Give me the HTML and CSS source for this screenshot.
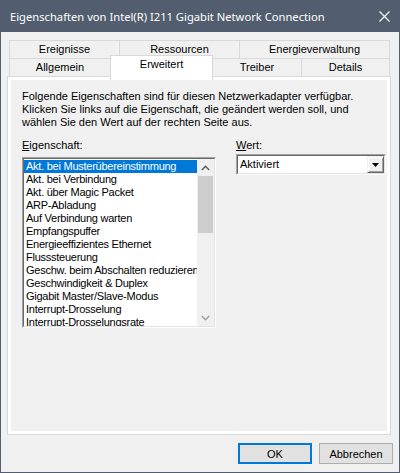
FILE: index.html
```html
<!DOCTYPE html>
<html lang="de">
<head>
<meta charset="utf-8">
<title>Eigenschaften</title>
<link rel="stylesheet" href="styles.css">
</head>
<body>
<div class="window">
  <div class="titlebar">
    <span class="title">Eigenschaften von Intel(R) I211 Gigabit Network Connection</span>
    <svg class="close" width="11" height="11" viewBox="0 0 11 11"><path d="M0.5 0.5 L10.5 10.5 M10.5 0.5 L0.5 10.5" stroke="#ffffff" stroke-width="1.1" fill="none"/></svg>
  </div>
  <div class="client">
    <div class="tabs">
      <div class="tabrow">
        <div class="tab t-ereignisse">Ereignisse</div>
        <div class="tab t-ressourcen">Ressourcen</div>
        <div class="tab t-energie">Energieverwaltung</div>
      </div>
      <div class="tabrow">
        <div class="tab t-allgemein">Allgemein</div>
        <div class="tab t-erweitert selected">Erweitert</div>
        <div class="tab t-treiber">Treiber</div>
        <div class="tab t-details">Details</div>
      </div>
    </div>
    <div class="panel">
      <p class="desc">Folgende Eigenschaften sind für diesen Netzwerkadapter verfügbar.<br>Klicken Sie links auf die Eigenschaft, die geändert werden soll, und<br>wählen Sie den Wert auf der rechten Seite aus.</p>
      <div class="fields">
        <div class="col-left">
          <div class="label"><u>E</u>igenschaft:</div>
          <div class="sunken listbox">
            <div class="sunken-inner listbox-inner">
              <ul class="items">
                <li class="sel">Akt. bei Musterübereinstimmung</li>
                <li>Akt. bei Verbindung</li>
                <li>Akt. über Magic Packet</li>
                <li>ARP-Abladung</li>
                <li>Auf Verbindung warten</li>
                <li>Empfangspuffer</li>
                <li>Energieeffizientes Ethernet</li>
                <li>Flusssteuerung</li>
                <li>Geschw. beim Abschalten reduzieren</li>
                <li>Geschwindigkeit &amp; Duplex</li>
                <li>Gigabit Master/Slave-Modus</li>
                <li>Interrupt-Drosselung</li>
                <li>Interrupt-Drosselungsrate</li>
              </ul>
              <div class="scrollbar">
                <div class="sb-btn"><svg width="9" height="6" viewBox="0 0 9 6"><path d="M0.8 5 L4.5 1.3 L8.2 5" stroke="#606060" stroke-width="1.6" fill="none"/></svg></div>
                <div class="sb-track">
                  <div class="sb-thumb"></div>
                </div>
                <div class="sb-btn"><svg width="9" height="6" viewBox="0 0 9 6"><path d="M0.8 1 L4.5 4.7 L8.2 1" stroke="#a0a0a0" stroke-width="1.6" fill="none"/></svg></div>
              </div>
            </div>
          </div>
        </div>
        <div class="col-right">
          <div class="label"><u>W</u>ert:</div>
          <div class="sunken combo">
            <div class="sunken-inner combo-inner">
              <span class="combo-text">Aktiviert</span>
              <div class="dropbtn"><svg width="7" height="4" viewBox="0 0 7 4"><path d="M0 0 H7 L3.5 4 Z" fill="#000"/></svg></div>
            </div>
          </div>
        </div>
      </div>
    </div>
    <div class="buttons">
      <button class="btn default">OK</button>
      <button class="btn">Abbrechen</button>
    </div>
  </div>
</div>
</body>
</html>
```

FILE: styles.css
```css
html, body {
  margin: 0;
  padding: 0;
  background: #f0f0f0;
}

body {
  font-family: "Liberation Sans", Arial, sans-serif;
  font-size: 11px;
  color: #000;
}

.window {
  width: 400px;
  height: 473px;
  display: flex;
  flex-direction: column;
}

.titlebar {
  height: 32px;
  flex: none;
  background: #525e6f;
  color: #fff;
  display: flex;
  align-items: center;
  padding-left: 10px;
  padding-right: 10px;
  font-family: "Segoe UI", "Noto Sans", sans-serif;
  font-size: 11.2px;
}

.title {
  white-space: nowrap;
}

.close {
  margin-left: auto;
  display: block;
}

.client {
  flex: 1;
  background: #f0f0f0;
  border: 1px solid #525e6f;
  border-top: none;
  padding: 8px 0 0 6px;
  display: flex;
  flex-direction: column;
}

/* Tabs */
.tabs {
  margin-left: 2px;
}

.tabrow {
  display: flex;
  height: 18px;
  align-items: flex-start;
}

.tab {
  box-sizing: border-box;
  height: 18px;
  border: 1px solid #d9d9d9;
  border-bottom: none;
  margin-right: -1px;
  background: #f0f0f0;
  text-align: center;
  line-height: 17px;
  white-space: nowrap;
}

.t-ereignisse { width: 111px; }
.t-ressourcen { width: 121px; }
.t-energie { width: 151px; }
.t-allgemein { width: 102px; }
.t-erweitert { width: 103px; }
.t-treiber { width: 90px; }
.t-details { width: 89px; }

.tab.selected {
  position: relative;
  z-index: 2;
  margin-top: -3px;
  height: 25px;
  background: #fff;
  line-height: 15px;
  padding-top: 1px;
}

/* Panel */
.panel {
  box-sizing: border-box;
  width: 384px;
  height: 359px;
  border: 1px solid #d9d9d9;
  box-shadow: inset 0 0 0 3px #fff;
  background: #f0f0f0;
  padding: 13px 0 0 14px;
}

.desc {
  margin: 0;
  line-height: 13px;
  white-space: nowrap;
}

.fields {
  display: flex;
  gap: 20px;
  margin-top: 10px;
}

.label {
  line-height: 13px;
  height: 13px;
}

.label u {
  text-decoration-thickness: 1px;
  text-underline-offset: 1px;
}

.col-left {
  width: 194px;
}

.col-right {
  width: 150px;
}

.sunken {
  box-sizing: border-box;
  border: 1px solid;
  border-color: #a0a0a0 #ffffff #ffffff #a0a0a0;
}

.sunken-inner {
  box-sizing: border-box;
  height: 100%;
  border: 1px solid;
  border-color: #696969 #e3e3e3 #e3e3e3 #696969;
}

.listbox {
  margin-top: 5px;
  height: 171px;
}

.listbox-inner {
  display: flex;
  background: #fff;
}

.items {
  flex: 1;
  min-width: 0;
  list-style: none;
  margin: 0;
  padding: 1px 0 0 0;
  overflow: hidden;
}

.items li {
  height: 13px;
  line-height: 13px;
  padding-left: 2px;
  white-space: nowrap;
  overflow: hidden;
  letter-spacing: -0.25px;
}

.items li.sel {
  background: #0078d7;
  color: #fff;
}

.scrollbar {
  width: 17px;
  flex: none;
  background: #f0f0f0;
  display: flex;
  flex-direction: column;
}

.sb-btn {
  height: 17px;
  flex: none;
  display: flex;
  align-items: center;
  justify-content: center;
}

.sb-track {
  flex: 1;
  padding: 0 1px;
}

.sb-thumb {
  height: 57px;
  background: #cdcdcd;
}

.combo {
  margin-top: 2px;
  height: 21px;
}

.combo-inner {
  display: flex;
  background: #fff;
}

.combo-text {
  flex: 1;
  padding-left: 2px;
  line-height: 17px;
}

.dropbtn {
  box-sizing: border-box;
  width: 17px;
  height: 17px;
  background: #f0f0f0;
  border: 1px solid;
  border-color: #f0f0f0 #696969 #696969 #f0f0f0;
  box-shadow: inset 1px 1px #ffffff, inset -1px -1px #a0a0a0;
  display: flex;
  align-items: center;
  justify-content: center;
}

/* Buttons */
.buttons {
  display: flex;
  justify-content: flex-end;
  gap: 7px;
  margin-top: 8px;
  margin-right: 6px;
}

.btn {
  box-sizing: border-box;
  width: 74px;
  height: 21px;
  padding: 0;
  margin: 0;
  font-family: "Liberation Sans", Arial, sans-serif;
  font-size: 11px;
  color: #000;
  background: #e1e1e1;
  border: 1px solid #adadad;
  border-radius: 0;
}

.btn.default {
  border: 2px solid #0078d7;
}
```
